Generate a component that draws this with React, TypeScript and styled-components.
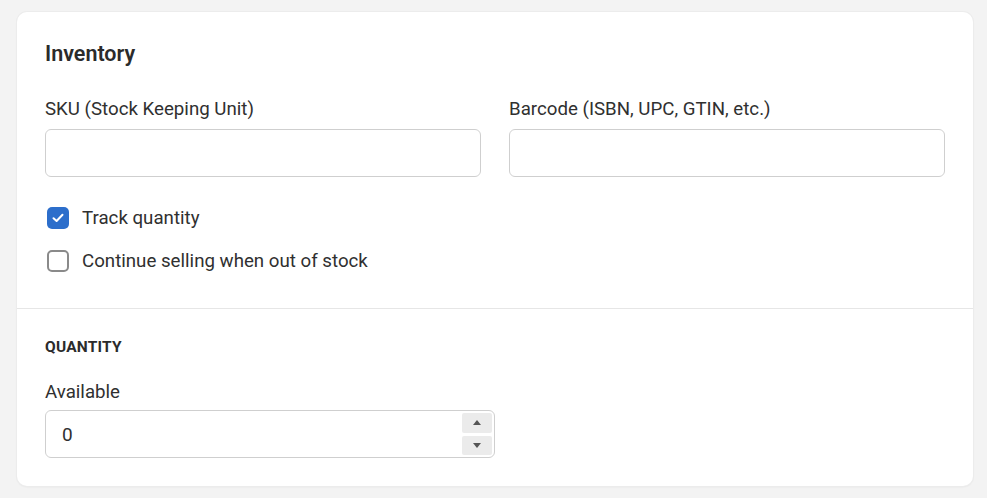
import React, { useState } from "react";
import styled, { createGlobalStyle } from "styled-components";

const Global = createGlobalStyle`
  html, body {
    margin: 0;
    background: #f3f3f3;
    font-family: Roboto, "Liberation Sans", sans-serif;
    color: #303030;
  }
  * { box-sizing: border-box; }
`;

const Page = styled.div`
  padding: 12px 14px 12px 17px;
`;

const Card = styled.div`
  background: #fff;
  border-radius: 10px;
  box-shadow: 0 0 0 1px #ececec, 0 1px 2px rgba(0, 0, 0, 0.08);
  overflow: hidden;
`;

const Section = styled.div<{ $last?: boolean }>`
  padding: ${p => (p.$last ? "27px 28px 28px" : "28px 28px 36px")};
  border-bottom: ${p => (p.$last ? "none" : "1px solid #e6e6e6")};
`;

const Title = styled.h2`
  margin: 0;
  font-size: 21.5px;
  line-height: 28px;
  font-weight: 600;
  color: #2b2b2b;
`;

const Row = styled.div`
  display: grid;
  grid-template-columns: 1fr 1fr;
  gap: 28px;
  margin-top: 29px;
`;

const Field = styled.div`
  display: flex;
  flex-direction: column;
`;

const Label = styled.label<{ $tight?: boolean }>`
  font-size: 18.7px;
  line-height: 24px;
  color: #303030;
  margin-bottom: ${p => (p.$tight ? "6px" : "8px")};
`;

const Input = styled.input`
  height: 48px;
  width: 100%;
  border: 1px solid #cfcfcf;
  border-radius: 6px;
  padding: 0 16px;
  font-size: 19px;
  font-family: inherit;
  color: #303030;
  outline: none;
`;

const Checks = styled.div`
  display: flex;
  flex-direction: column;
  gap: 21px;
  margin-top: 30px;
`;

const CheckRow = styled.label`
  display: flex;
  align-items: center;
  gap: 13px;
  font-size: 18.7px;
  line-height: 22px;
  cursor: pointer;
  padding-left: 2px;
`;

const Box = styled.span<{ $on: boolean }>`
  width: 22px;
  height: 22px;
  border-radius: 5px;
  display: flex;
  align-items: center;
  justify-content: center;
  background: ${p => (p.$on ? "#2c6ecb" : "#fff")};
  border: ${p => (p.$on ? "none" : "2px solid #8a8a8a")};
`;

const Sub = styled.h3`
  margin: 0;
  font-size: 15.5px;
  line-height: 22px;
  font-weight: 700;
  letter-spacing: 0.2px;
  text-transform: uppercase;
  color: #2b2b2b;
`;

const QtyField = styled(Field)`
  width: 450px;
  margin-top: 22px;
`;

const Spin = styled.div`
  position: relative;
`;

const Steps = styled.div`
  position: absolute;
  right: 3px;
  top: 3px;
  bottom: 3px;
  display: flex;
  flex-direction: column;
  gap: 3px;
`;

const Step = styled.button`
  width: 30px;
  flex: 1;
  border: none;
  border-radius: 2px;
  background: #ebebeb;
  display: flex;
  align-items: center;
  justify-content: center;
  padding: 0;
  cursor: pointer;
`;

const Check = ({ on, text, onToggle }: { on: boolean; text: string; onToggle: () => void }) => (
  <CheckRow onClick={onToggle}>
    <Box $on={on}>
      {on && (
        <svg width="12" height="10" viewBox="0 0 12 10">
          <path d="M1.5 5.2 L4.6 8 L10.5 1.8" fill="none" stroke="#fff" strokeWidth="2" strokeLinecap="round" strokeLinejoin="round" />
        </svg>
      )}
    </Box>
    {text}
  </CheckRow>
);

export default function App() {
  const [track, setTrack] = useState(true);
  const [sell, setSell] = useState(false);
  const [qty, setQty] = useState(0);

  return (
    <Page>
      <Global />
      <Card>
        <Section>
          <Title>Inventory</Title>
          <Row>
            <Field>
              <Label>SKU (Stock Keeping Unit)</Label>
              <Input />
            </Field>
            <Field>
              <Label>Barcode (ISBN, UPC, GTIN, etc.)</Label>
              <Input />
            </Field>
          </Row>
          <Checks>
            <Check on={track} text="Track quantity" onToggle={() => setTrack(!track)} />
            <Check on={sell} text="Continue selling when out of stock" onToggle={() => setSell(!sell)} />
          </Checks>
        </Section>
        <Section $last>
          <Sub>Quantity</Sub>
          <QtyField>
            <Label $tight>Available</Label>
            <Spin>
              <Input value={qty} onChange={e => setQty(Number(e.target.value) || 0)} />
              <Steps>
                <Step onClick={() => setQty(qty + 1)}>
                  <svg width="8" height="5" viewBox="0 0 8 5"><path d="M0 5 L4 0 L8 5 Z" fill="#555" /></svg>
                </Step>
                <Step onClick={() => setQty(qty - 1)}>
                  <svg width="8" height="5" viewBox="0 0 8 5"><path d="M0 0 L4 5 L8 0 Z" fill="#555" /></svg>
                </Step>
              </Steps>
            </Spin>
          </QtyField>
        </Section>
      </Card>
    </Page>
  );
}
